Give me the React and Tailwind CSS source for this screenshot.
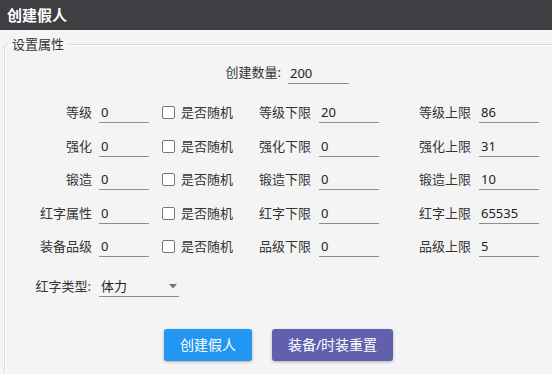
import React from "react";

const font = "font-['Noto_Sans','Noto_Sans_CJK_SC',sans-serif]";

function Field({ value, w }) {
  return (
    <div className={`h-[21px] border-b border-[#8c8c8c] pl-[2px] text-[13px] leading-[20px] text-[#222] ${w}`}>
      {value}
    </div>
  );
}

const rows = [
  ["等级", "0", "等级下限", "20", "等级上限", "86"],
  ["强化", "0", "强化下限", "0", "强化上限", "31"],
  ["锻造", "0", "锻造下限", "0", "锻造上限", "10"],
  ["红字属性", "0", "红字下限", "0", "红字上限", "65535"],
  ["装备品级", "0", "品级下限", "0", "品级上限", "5"],
];

export default function App() {
  return (
    <div className={`w-[552px] h-[374px] overflow-hidden bg-[#f4f4f4] text-[#333] ${font}`}>
      <div className="h-[30px] bg-[#3f3e43] flex items-center pl-[7px] text-white text-[15px] font-bold leading-none">
        创建假人
      </div>
      <div className="pl-[4px]">
        <fieldset className="mt-[6px] w-[570px] h-[400px] border border-[#d0dce6] rounded-[3px] shadow-[inset_1px_1px_0_#ffffff]">
          <legend className="ml-[3px] px-[4px] text-[13px] leading-[17px] text-[#333]">设置属性</legend>
          <div className="pt-[3px]">
            <div className="h-[34px] flex items-center text-[13px]">
              <div className="w-[276px] text-right">创建数量:</div>
              <div className="ml-[7px]"><Field value="200" w="w-[61px]" /></div>
            </div>
            <div className="mt-[6px]">
              {rows.map((r, i) => (
                <div key={i} className="h-[33.5px] flex items-center text-[13px]">
                  <div className="w-[87px] text-right shrink-0">{r[0]}</div>
                  <div className="ml-[7px] shrink-0"><Field value={r[1]} w="w-[50px]" /></div>
                  <div className="ml-[13px] w-[13px] h-[13px] border border-[#777] rounded-[2px] bg-white shrink-0" />
                  <div className="ml-[6px] w-[48px] whitespace-nowrap shrink-0">是否随机</div>
                  <div className="w-[82px] text-right shrink-0">{r[2]}</div>
                  <div className="ml-[8px] shrink-0"><Field value={r[3]} w="w-[60px]" /></div>
                  <div className="w-[92px] text-right shrink-0">{r[4]}</div>
                  <div className="ml-[8px] shrink-0"><Field value={r[5]} w="w-[60px]" /></div>
                </div>
              ))}
            </div>
            <div className="mt-[6px] h-[34px] flex items-center text-[13px]">
              <div className="w-[86px] text-right">红字类型:</div>
              <div className="ml-[8px] w-[80px] h-[21px] border-b border-[#8c8c8c] pl-[2px] flex items-center justify-between leading-[20px] text-[#222]">
                <span>体力</span>
                <svg width="8" height="5" viewBox="0 0 8 5" className="mr-[2px]">
                  <path d="M0 0 L8 0 L4 4.5 Z" fill="#757575" />
                </svg>
              </div>
            </div>
            <div className="mt-[25px] flex ml-[159px] gap-[20px]">
              <button className="w-[88px] h-[32px] rounded-[3px] bg-[#2196f3] text-white text-[14px] shadow-[0_1px_3px_rgba(0,0,0,0.3)]">
                创建假人
              </button>
              <button className="w-[121px] h-[32px] rounded-[3px] bg-[#6060ae] text-white text-[14px] shadow-[0_1px_3px_rgba(0,0,0,0.3)]">
                装备/时装重置
              </button>
            </div>
          </div>
        </fieldset>
      </div>
    </div>
  );
}
